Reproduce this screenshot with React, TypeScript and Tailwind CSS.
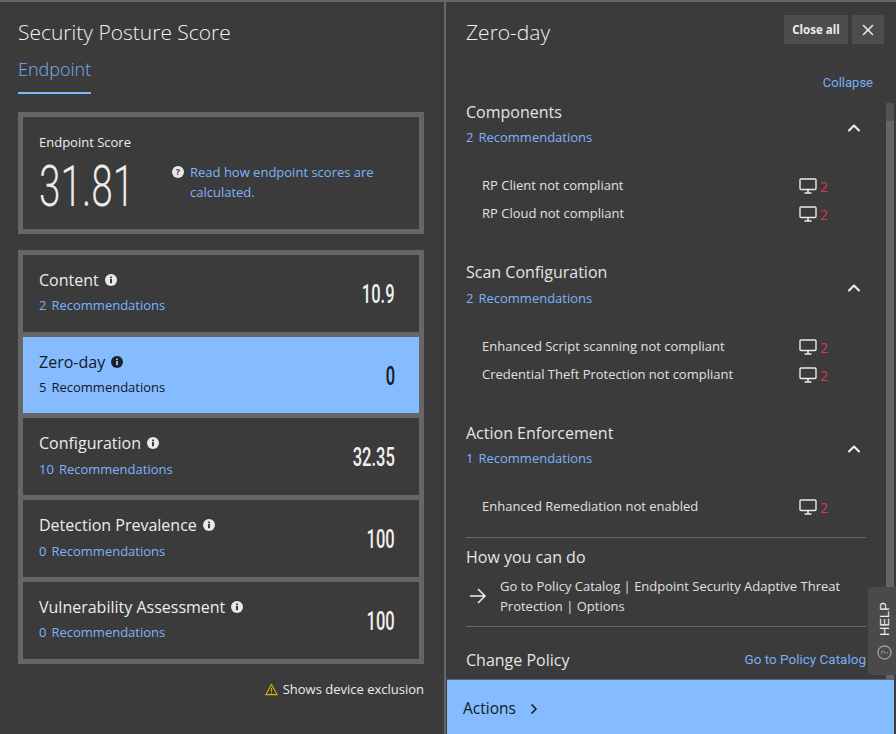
import { ChevronRight, ChevronUp, X } from 'lucide-react';

const openSans = "font-['Open_Sans',sans-serif]";
const score = "font-['Roboto',sans-serif]";

interface ScoreRow {
  title: string;
  count: number;
  value: string;
  active?: boolean;
  height: string;
  recTop: string;
}

const rows: ScoreRow[] = [
  { title: 'Content', count: 2, value: '10.9', height: 'h-[77px]', recTop: 'mt-[5px]' },
  { title: 'Zero-day', count: 5, value: '0', active: true, height: 'h-[76px]', recTop: 'mt-[5px]' },
  { title: 'Configuration', count: 10, value: '32.35', height: 'h-[77px]', recTop: 'mt-[6px]' },
  { title: 'Detection Prevalence', count: 0, value: '100', height: 'h-[77px]', recTop: 'mt-[6px]' },
  { title: 'Vulnerability Assessment', count: 0, value: '100', height: 'h-[77px]', recTop: 'mt-[5px]' },
];

const sections = [
  { title: 'Components', count: 2, items: ['RP Client not compliant', 'RP Cloud not compliant'], height: 'h-[160px]', recTop: 'mt-[5px]' },
  { title: 'Scan Configuration', count: 2, items: ['Enhanced Script scanning not compliant', 'Credential Theft Protection not compliant'], height: 'h-[161px]', recTop: 'mt-[6px]' },
  { title: 'Action Enforcement', count: 1, items: ['Enhanced Remediation not enabled'], height: 'h-[115px]', recTop: 'mt-[5px]' },
];

function InfoDot({ dark }: { dark?: boolean }) {
  return (
    <svg viewBox="0 0 12 12" className="h-3 w-3 shrink-0">
      <circle cx="6" cy="6" r="6" fill={dark ? '#1c1f26' : '#e8e8e8'} />
      <rect x="5" y="5" width="2" height="4.2" fill={dark ? '#85bcff' : '#3b3b3b'} />
      <rect x="5" y="2.6" width="2" height="1.6" fill={dark ? '#85bcff' : '#3b3b3b'} />
    </svg>
  );
}

function Monitor() {
  return (
    <svg viewBox="0 0 18 16" className="h-4 w-[18px]" fill="none" stroke="#ececec" strokeWidth="1.4">
      <rect x="1" y="1" width="16" height="10.5" rx="1" />
      <path d="M9 12v2.5M5.5 15h7" strokeWidth="1.6" />
    </svg>
  );
}

function Recommendations({ count, className }: { count: number; className: string }) {
  return (
    <div className={`text-[13px] leading-[18px] ${className}`}>
      <span className="mr-[5px]">{count}</span>Recommendations
    </div>
  );
}

export default function App() {
  return (
    <div className={`${openSans} relative flex h-[734px] w-[896px] overflow-hidden border-t-2 border-[#666666] bg-[#3b3b3b]`}>
      {/* Left panel */}
      <div className="flex w-[446px] shrink-0 flex-col border-r-2 border-[#666666] pl-[18px] pr-5">
        <h1 className="mt-[15px] text-[21px] font-light leading-[30px] text-[#f2f2f2]">Security Posture Score</h1>
        <div className="mt-[10px] w-[73px] border-b-2 border-[#7db8fb] pb-[10px] text-[18px] font-light leading-[25px] text-[#78aef5]">
          Endpoint
        </div>

        <div className="mt-[18px] h-[122px] border-[5px] border-[#666666] pl-4 pt-4">
          <div className="text-[13px] font-medium leading-[18px] text-[#ececec]">Endpoint Score</div>
          <div className="mt-[5px] flex items-start">
            <div className={`${score} mt-px w-[133px] origin-left scale-x-[0.68] text-[57px] font-light leading-[60px] text-[#ececec]`}>31.81</div>
            <div className="mt-[6px] flex items-start text-[13px] leading-5 text-[#7db3fa]">
              <svg viewBox="0 0 12 12" className="mr-[6px] mt-1 h-3 w-3 shrink-0">
                <circle cx="6" cy="6" r="6" fill="#e8e8e8" />
                <text x="6" y="9.4" textAnchor="middle" fontSize="9" fontWeight="700" fill="#3b3b3b">?</text>
              </svg>
              <span className="w-[200px]">Read how endpoint scores are calculated.</span>
            </div>
          </div>
        </div>

        <div className="mt-4 flex flex-col gap-[5px] bg-[#666666] p-[5px]">
          {rows.map((row) => (
            <div
              key={row.title}
              className={`flex ${row.height} items-center justify-between pl-4 pr-6 ${row.active ? 'bg-[#85bcff]' : 'bg-[#3b3b3b]'}`}
            >
              <div className="self-start pt-[14px]">
                <div className={`flex items-center gap-[6px] text-[16px] leading-[22px] ${row.active ? 'text-[#14181f]' : 'text-[#ececec]'}`}>
                  {row.title}
                  <InfoDot dark={row.active} />
                </div>
                <Recommendations
                  count={row.count}
                  className={`${row.recTop} ${row.active ? 'text-[#14181f]' : 'text-[#7db3fa]'}`}
                />
              </div>
              <span className={`${score} mt-[3px] origin-right scale-x-[0.66] text-[25px] font-medium ${row.active ? 'text-[#14181f]' : 'text-[#f0f0f0]'}`}>
                {row.value}
              </span>
            </div>
          ))}
        </div>

        <div className="mt-[16px] flex items-center justify-end gap-[5px] text-[13px] leading-[18px] text-[#ececec]">
          <svg viewBox="0 0 14 13" className="h-[13px] w-[13px]" fill="none" stroke="#d8b400" strokeWidth="1.2">
            <path d="M7 1 13 12H1Z" />
            <path d="M7 5v4M7 10v1" />
          </svg>
          Shows device exclusion
        </div>
      </div>

      {/* Right panel */}
      <div className="relative flex min-w-0 flex-1 flex-col">
        <div className="flex h-[49px] items-start justify-between pl-5 pr-3 pt-[13px]">
          <h2 className="mt-[2px] text-[21px] font-light leading-[30px] text-[#f2f2f2]">Zero-day</h2>
          <div className="flex gap-1">
            <button className="h-[29px] w-16 bg-[#4d4d4d] text-[11.5px] font-bold text-[#ececec]">Close all</button>
            <button className="flex h-[29px] w-8 items-center justify-center bg-[#4d4d4d] text-[#ececec]">
              <X size={18} strokeWidth={2} />
            </button>
          </div>
        </div>

        <div className="flex-1 pl-5 pr-[30px]">
          <div className="-mr-[7px] mt-[22px] text-right font-['Roboto',sans-serif] text-[13px] leading-5 text-[#78aef5]">Collapse</div>

          <div className="mt-2">
            {sections.map((section) => (
              <div key={section.title} className={section.height}>
                <div className="flex items-center justify-between pr-[4px]">
                  <div>
                    <div className="text-[16px] leading-[22px] text-[#e4e4e4]">{section.title}</div>
                    <Recommendations count={section.count} className={`${section.recTop} text-[#7db3fa]`} />
                  </div>
                  <ChevronUp size={20} strokeWidth={2.5} className="-mr-[2px] mt-2 text-[#f0f0f0]" />
                </div>
                <div className="mt-[30px] flex flex-col gap-[8px] pl-4">
                  {section.items.map((item) => (
                    <div key={item} className="flex h-5 items-center justify-between pr-[38px] text-[13px] text-[#e0e0e0]">
                      {item}
                      <span className="flex items-center gap-[3px] text-[14px] text-[#e0314f]">
                        <Monitor />
                        2
                      </span>
                    </div>
                  ))}
                </div>
              </div>
            ))}
          </div>

          <div className="border-t border-[#666666] pt-[7px]">
            <div className="text-[16px] leading-[24px] text-[#e4e4e4]">How you can do</div>
            <div className="mt-[7px] flex items-center gap-[14px] pb-[10px] pl-[4px] text-[13px] leading-5 text-[#e0e0e0]">
              <svg viewBox="0 0 16 16" className="h-4 w-4 shrink-0" fill="none" stroke="#f0f0f0" strokeWidth="1.5">
                <path d="M0 8h15M8 1l7 7-7 7" />
              </svg>
              <span>Go to Policy Catalog | Endpoint Security Adaptive Threat Protection | Options</span>
            </div>
          </div>

          <div className="flex h-[52px] items-center justify-between border-t border-[#666666] pt-[14px]">
            <span className="text-[16px] text-[#e4e4e4]">Change Policy</span>
            <span className="font-['Roboto',sans-serif] text-[13.5px] text-[#78aef5]">Go to Policy Catalog</span>
          </div>
        </div>

        <div className="ml-px mr-[2px] flex h-[55px] shrink-0 items-center gap-[10px] border-t border-[#666666] bg-[#85bcff] pl-4 pt-[3px] text-[15.5px] text-[#14181f]">
          Actions
          <ChevronRight size={16} strokeWidth={2.5} />
        </div>

        {/* Scrollbar */}
        <div className="absolute right-[2px] top-[101px] h-[577px] w-2 bg-[#525252]">
          <div className="mt-[18px] h-[559px] bg-[#666666]" />
        </div>

        {/* Help tab */}
        <div className="absolute right-0 top-[585px] flex h-[88px] w-[28px] flex-col items-center justify-center gap-[9px] rounded-l bg-[#4a4a4a] pl-[4px]">
          <span className="rotate-180 font-['Liberation_Sans',sans-serif] text-[13px] leading-none text-[#f0f0f0] [writing-mode:vertical-rl]">HELP</span>
          <svg viewBox="0 0 16 16" className="h-[15px] w-[15px] -rotate-90" fill="none" stroke="#a8a8a8" strokeWidth="1.3">
            <circle cx="8" cy="8" r="7" />
            <text x="8" y="11.5" textAnchor="middle" fontSize="10" fill="#a8a8a8" stroke="none">?</text>
          </svg>
        </div>
      </div>
    </div>
  );
}
